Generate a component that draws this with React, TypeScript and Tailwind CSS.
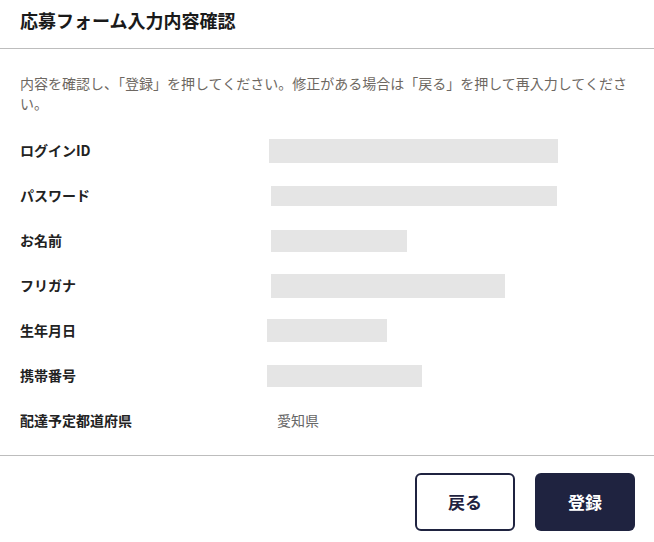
import React from 'react';

const ROWS = [
    { label: 'ログインID', box: 'ml-[2px] w-[289px] h-[24px]' },
    { label: 'パスワード', box: 'ml-[4px] w-[286px] h-[20px]' },
    { label: 'お名前', box: 'ml-[4px] w-[136px] h-[22px]' },
    { label: 'フリガナ', box: 'ml-[4px] w-[234px] h-[24px]' },
    { label: '生年月日', box: 'ml-0 w-[120px] h-[23px]' },
    { label: '携帯番号', box: 'ml-0 w-[155px] h-[22px]' },
];

export default function App() {
    return (
        <div className="w-[654px] h-[542px] bg-white text-[#222] overflow-hidden" style={{ fontFamily: '"Noto Sans CJK JP", "Noto Sans", sans-serif' }}>
            <div className="h-[49px] px-5 pt-[7px] border-b border-[#bdbdbd]">
                <h1 className="text-[18px] font-bold leading-[26px] text-[#1a1a1a]">応募フォーム入力内容確認</h1>
            </div>

            <div className="px-5 pt-[24px]">
                <p className="text-[14px] leading-[20px] text-[#6e6862]">
                    内容を確認し、「登録」を押してください。修正がある場合は「戻る」を押して再入力してください。
                </p>

                <div className="mt-[15px] flex flex-col">
                    {ROWS.map((row) => (
                        <div key={row.label} className="h-[45px] flex items-center">
                            <div className="w-[247px] text-[14px] font-bold text-[#222]">{row.label}</div>
                            <div className={`bg-[#e5e5e5] ${row.box}`} />
                        </div>
                    ))}
                    <div className="h-[45px] flex items-center">
                        <div className="w-[247px] text-[14px] font-bold text-[#222]">配達予定都道府県</div>
                        <div className="ml-[10px] text-[14px] text-[#666]">愛知県</div>
                    </div>
                </div>
            </div>

            <div className="mt-[12px] border-t border-[#bdbdbd] pt-[17px] pr-[19px] flex justify-end gap-5">
                <button className="w-[100px] h-[58px] rounded-[6px] border-2 border-[#1f2340] bg-white text-[17px] font-bold text-[#1f2340]">
                    戻る
                </button>
                <button className="w-[100px] h-[58px] rounded-[6px] bg-[#1f2340] text-[17px] font-bold text-white">
                    登録
                </button>
            </div>
        </div>
    );
}
